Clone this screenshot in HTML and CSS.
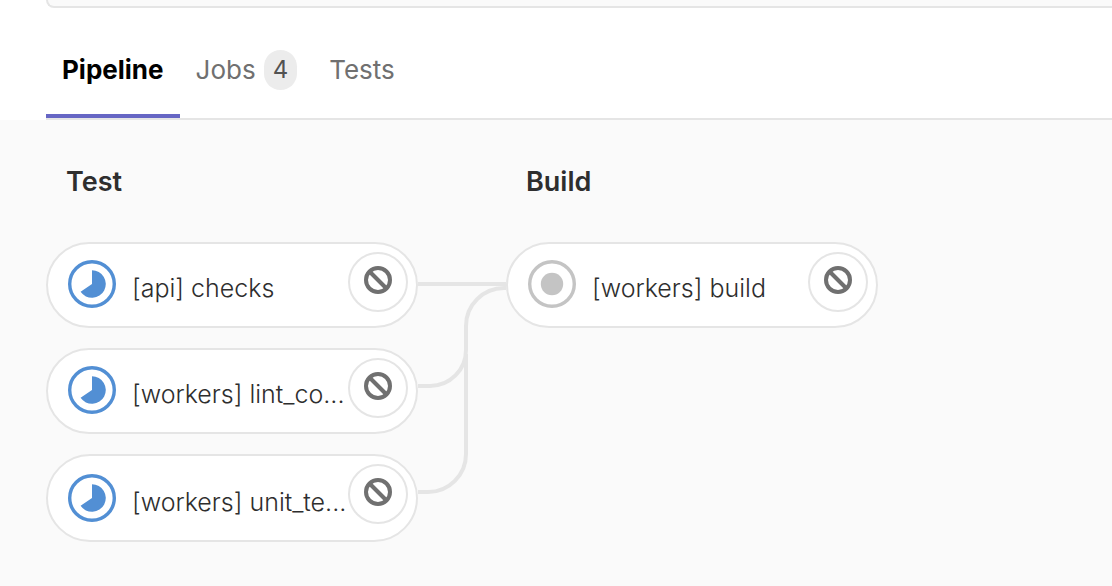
FILE: index.html
```html
<!DOCTYPE html>
<html lang="en">
<head>
<meta charset="utf-8">
<title>Pipeline</title>
<link rel="stylesheet" href="styles.css">
</head>
<body>
<svg class="sprite" aria-hidden="true">
  <symbol id="running" viewBox="0 0 48 48">
    <circle cx="24" cy="24" r="22.3" fill="#fff" stroke="#528fd4" stroke-width="3.4"/>
    <path d="M24 10.2A13.8 13.8 0 1 1 12.6 31.8L24 24Z" fill="#528fd4"/>
  </symbol>
  <symbol id="created" viewBox="0 0 48 48">
    <circle cx="24" cy="24" r="22.3" fill="#fff" stroke="#c4c4c4" stroke-width="3.4"/>
    <circle cx="24" cy="24" r="11.2" fill="#c4c4c4"/>
  </symbol>
  <symbol id="cancel" viewBox="0 0 28 28">
    <circle cx="14" cy="14" r="12" fill="none" stroke="#707070" stroke-width="4"/>
    <path d="M5.5 5.5 22.5 22.5" fill="none" stroke="#707070" stroke-width="4"/>
  </symbol>
</svg>
<div class="panel"></div>
<nav class="tabs">
  <a class="tab active" href="#pipeline" aria-current="page">Pipeline</a>
  <a class="tab" href="#jobs">Jobs <span class="badge">4</span></a>
  <a class="tab" href="#tests">Tests</a>
</nav>
<main class="graph">
  <section class="stage">
    <h2 class="stage-name">Test</h2>
    <ul class="jobs">
      <li class="job">
        <a class="job-link" href="#checks"><svg class="status"><use href="#running"/></svg><span class="job-name">[api] checks</span></a>
        <button class="action" type="button" aria-label="Cancel [api] checks"><svg class="action-icon"><use href="#cancel"/></svg></button>
      </li>
      <li class="job">
        <a class="job-link" href="#lint"><svg class="status"><use href="#running"/></svg><span class="job-name">[workers] lint_co...</span></a>
        <button class="action" type="button" aria-label="Cancel lint"><svg class="action-icon"><use href="#cancel"/></svg></button>
      </li>
      <li class="job tall">
        <a class="job-link" href="#unit"><svg class="status"><use href="#running"/></svg><span class="job-name">[workers] unit_te...</span></a>
        <button class="action" type="button" aria-label="Cancel unit tests"><svg class="action-icon"><use href="#cancel"/></svg></button>
      </li>
    </ul>
  </section>
  <svg class="links" viewBox="0 0 88 300" aria-hidden="true">
    <path d="M0 42H88M88 46H86A38 38 0 0 0 48 84V108A36 36 0 0 1 12 144H0M48 112V212A38 38 0 0 1 10 250H0"/>
  </svg>
  <section class="stage">
    <h2 class="stage-name">Build</h2>
    <ul class="jobs">
      <li class="job">
        <a class="job-link" href="#build"><svg class="status"><use href="#created"/></svg><span class="job-name">[workers] build</span></a>
        <button class="action" type="button" aria-label="Cancel build"><svg class="action-icon"><use href="#cancel"/></svg></button>
      </li>
    </ul>
  </section>
</main>
</body>
</html>
```

FILE: styles.css
```css
* {
  box-sizing: border-box;
}

body {
  margin: 0;
  min-height: 100vh;
  display: flex;
  flex-direction: column;
  background: #fff;
  color: #2e2e2e;
  font-family: Inter, "Liberation Sans", sans-serif;
  font-size: 26px;
}

.sprite {
  display: none;
}

.panel {
  height: 8px;
  margin-left: 46px;
  border: solid #e5e5e5;
  border-width: 0 0 2px 2px;
  border-bottom-left-radius: 8px;
  background: #fafafa;
}

.tabs {
  display: flex;
  height: 112px;
  margin-left: 46px;
  border-bottom: 2px solid #e5e5e5;
}

.tab {
  display: flex;
  align-items: center;
  gap: 8px;
  padding: 18px 16px 0;
  border-bottom: 4px solid transparent;
  color: #707070;
  line-height: 40px;
  text-decoration: none;
}

.active {
  border-color: #6666c4;
  color: #000;
  font-weight: 700;
}

.badge {
  padding: 0 9px;
  border-radius: 20px;
  background: #ececec;
  color: #525252;
  font-size: 24px;
}

.graph {
  flex: 1;
  display: flex;
  align-items: flex-start;
  padding: 42px 46px;
  background: #fafafa;
}

.stage {
  flex: 0 1 372px;
  min-width: 0;
}

.stage-name {
  margin: 0 0 40px;
  padding-left: 20px;
  font-size: 27px;
  font-weight: 600;
  line-height: 40px;
}

.jobs {
  display: grid;
  grid-template-columns: minmax(0, 1fr);
  gap: 20px;
  margin: 0;
  padding: 0;
  list-style: none;
}

.job {
  display: flex;
  align-items: flex-start;
  height: 86px;
  padding: 8px 8px 8px 20px;
  border: 2px solid #e5e5e5;
  border-radius: 44px;
  background: #fff;
}

.tall {
  height: 88px;
}

.job-link {
  flex: 1;
  display: flex;
  align-items: center;
  gap: 16px;
  min-width: 0;
  padding-top: 8px;
  color: #2e2e2e;
  font-size: 25px;
  font-weight: 300;
  text-decoration: none;
  white-space: nowrap;
}

.tall .job-link {
  padding-top: 10px;
}

.status {
  flex: none;
  width: 48px;
  height: 48px;
}

.job-name {
  padding-top: 8px;
  line-height: 40px;
}

.action {
  flex: none;
  width: 60px;
  height: 60px;
  padding: 0 0 4px;
  display: grid;
  place-items: center;
  border: 2px solid #e5e5e5;
  border-radius: 50%;
  background: #fff;
}

.action-icon {
  width: 28px;
  height: 28px;
}

.links {
  flex: none;
  width: 88px;
  height: 300px;
  margin-top: 80px;
  fill: none;
  stroke: #e5e5e5;
  stroke-width: 4;
}
```
